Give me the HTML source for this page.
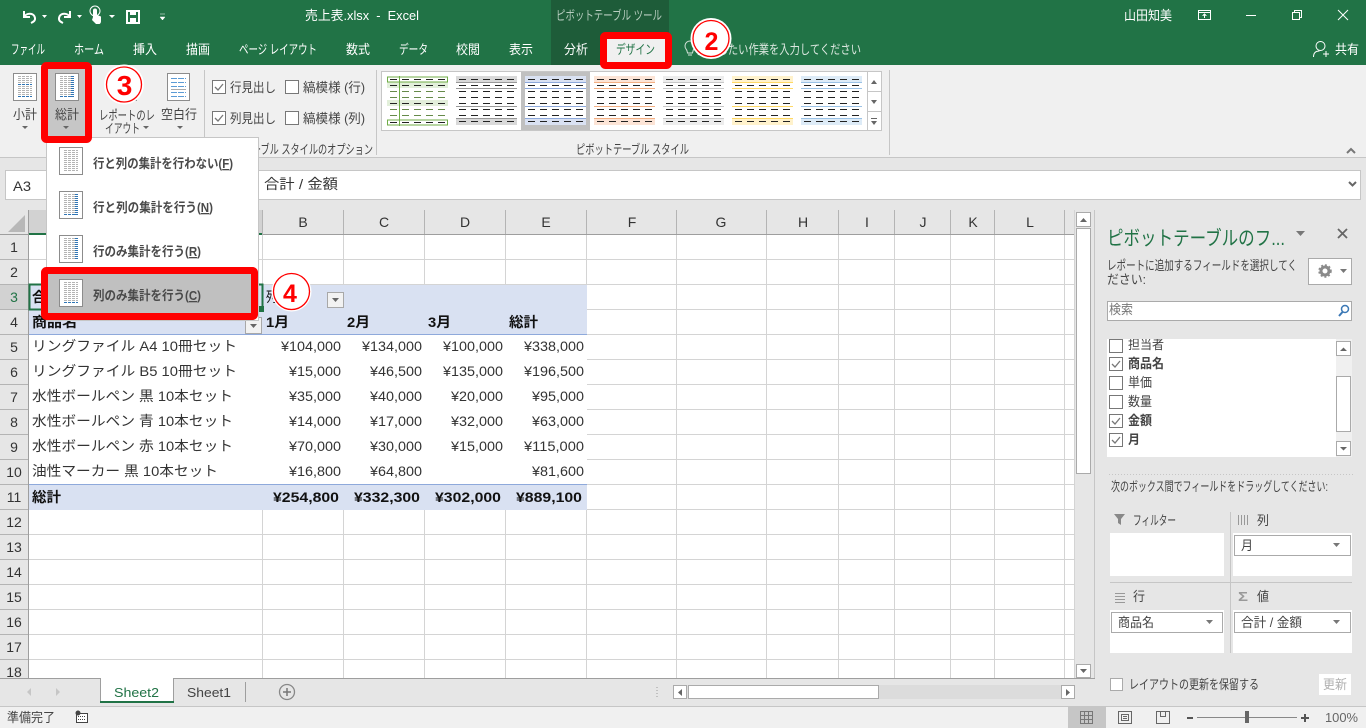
<!DOCTYPE html>
<html lang="ja"><head><meta charset="utf-8"><title>売上表.xlsx - Excel</title>
<style>
html,body{margin:0;padding:0;width:1366px;height:728px;overflow:hidden;background:#fff}
svg{display:block}
text{font-family:"Liberation Sans","Noto Sans CJK JP",sans-serif;font-size:13px;fill:#444;white-space:pre}
.w{fill:#fff}.c{font-size:14px;fill:#333}.b{font-size:14px;font-weight:700;fill:#111}
.h{font-size:14px;fill:#333;text-anchor:middle}
.m{font-size:13px;font-weight:700;fill:#4a4a4a}
.circ{font-size:25px;font-weight:700;fill:#f00;text-anchor:middle}
.r{shape-rendering:crispEdges}
</style></head><body>
<svg width="1366" height="728" viewBox="0 0 1366 728" xmlns="http://www.w3.org/2000/svg">
<defs>
<g id="dots"><path class="r" d="M0 3.500H14M0 5.500H14M0 7.500H14M0 9.500H14M0 11.500H14M0 13.500H14M0 15.500H14M0 17.500H14M0 19.500H14M0 21.500H14M0 23.500H14" stroke="#b4b4b4" stroke-dasharray="3 1" fill="none"/></g>
<g id="doc"><rect class="r" x=".5" y=".5" width="23" height="27" fill="#fff" stroke="#8c8c8c"/><use href="#dots" x="5" y="0"/></g>
<g id="docNone"><use href="#doc"/></g>
<g id="docAll"><use href="#doc"/><path class="r" d="M17.500 3V24" stroke="#2f75b5" stroke-width="3" stroke-dasharray="1 1"/><path class="r" d="M5 23.500H19" stroke="#2f75b5" stroke-dasharray="3 1"/></g>
<g id="docRow"><use href="#doc"/><path class="r" d="M17.500 3V24" stroke="#2f75b5" stroke-width="3" stroke-dasharray="1 1"/></g>
<g id="docCol"><use href="#doc"/><path class="r" d="M5 23.500H19" stroke="#2f75b5" stroke-dasharray="3 1"/></g>
<g id="docSub"><use href="#doc"/><path class="r" d="M5 11.500H19M5 23.500H19" stroke="#2f75b5" stroke-dasharray="3 1"/></g>
<g id="dash"><path d="M3 3.500H58M3 9.500H58M3 15.500H58M3 21.500H58M3 27.500H58M3 33.500H58M3 39.500H58M3 45.500H58" stroke="#222" stroke-dasharray="7 5" fill="none"/></g>
<g id="check"><rect class="r" x=".5" y=".5" width="13" height="13" fill="#fff" stroke="#777"/></g>
<g id="checked"><use href="#check"/><path d="M3 7l3 3 5-6" fill="none" stroke="#777" stroke-width="1.300"/></g>
</defs>

<!-- Title and tabs -->
<rect class="r" width="1366" height="65" fill="#217346"/>
<rect class="r" x="551" width="118" height="65" fill="#1e5c39"/>
<g fill="none" stroke="#fff" stroke-width="2">
<path d="M24 11v6h6M24 17c2-4 10-5 11 1 .4 3-2 4-4 5"/>
<path d="M70 11v6h-6M70 17c-2-4-10-5-11 1-.4 3 2 4 4 5"/>
</g>
<path d="M93 17V10.500a2 2 0 014 0V15l4 1.500V21c0 2-1 3-2 3h-3l-4-4z" fill="#fff"/>
<circle cx="95" cy="11" r="5" fill="none" stroke="#fff"/>
<path d="M42 15h5l-2.500 3zM77 15h5l-2.500 3zM109 15h6l-3 3z" fill="#fff"/>
<rect class="r" x="127" y="11" width="12" height="12" fill="none" stroke="#fff" stroke-width="2"/>
<rect class="r" x="130" y="11" width="6" height="4" fill="#fff"/><rect class="r" x="130" y="18" width="6" height="5" fill="#fff"/>
<path d="M160 14h5M160 17h5l-2.500 3z" fill="#fff" stroke="#fff" stroke-width=".5"/>
<text class="w" x="305" y="20" textLength="114" lengthAdjust="spacingAndGlyphs">売上表.xlsx  -  Excel</text>
<text x="556" y="20" textLength="106" lengthAdjust="spacingAndGlyphs" style="fill:#b7cdbf">ピボットテーブル ツール</text>
<text class="w" x="1124" y="20" textLength="48" lengthAdjust="spacingAndGlyphs">山田知美</text>
<g fill="none" stroke="#fff" class="r">
<rect x="1198.500" y="10.500" width="12" height="9"/><path d="M1198 12.500H1211M1204.500 18V14M1202.500 16l2-2 2 2"/>
<path d="M1246 15.500H1256"/>
<rect x="1292.500" y="12.500" width="7" height="7"/><path d="M1294.500 12V10.500H1301.500V17.500H1300"/>
</g>
<path d="M1338 10l10 10M1348 10l-10 10" stroke="#fff" fill="none"/>
<text class="w" x="11" y="54" textLength="34" lengthAdjust="spacingAndGlyphs">ファイル</text>
<text class="w" x="74" y="54" textLength="30" lengthAdjust="spacingAndGlyphs">ホーム</text>
<text class="w" x="133" y="54" textLength="24" lengthAdjust="spacingAndGlyphs">挿入</text>
<text class="w" x="186" y="54" textLength="24" lengthAdjust="spacingAndGlyphs">描画</text>
<text class="w" x="239" y="54" textLength="78" lengthAdjust="spacingAndGlyphs">ページ レイアウト</text>
<text class="w" x="346" y="54" textLength="24" lengthAdjust="spacingAndGlyphs">数式</text>
<text class="w" x="399" y="54" textLength="29" lengthAdjust="spacingAndGlyphs">データ</text>
<text class="w" x="456" y="54" textLength="24" lengthAdjust="spacingAndGlyphs">校閲</text>
<text class="w" x="509" y="54" textLength="24" lengthAdjust="spacingAndGlyphs">表示</text>
<text class="w" x="564" y="54" textLength="24" lengthAdjust="spacingAndGlyphs">分析</text>
<path d="M686 49a5 5 0 118 0c-1 1-1 2-1.500 4h-5c-.5-2-.5-3-1.500-4z" fill="none" stroke="#d5e3da"/>
<path d="M688 55h4" stroke="#d5e3da"/>
<text x="697" y="54" textLength="164" lengthAdjust="spacingAndGlyphs" style="fill:#dbe7df">実行したい作業を入力してください</text>
<circle cx="1320.500" cy="46" r="4.500" fill="none" stroke="#fff"/><path d="M1313.500 57c0-4 2-6 6-6M1323 54h6M1326 51v6" fill="none" stroke="#fff"/>
<text class="w" x="1335" y="54" textLength="24" lengthAdjust="spacingAndGlyphs">共有</text>

<!-- Ribbon -->
<rect class="r" y="65" width="1366" height="92" fill="#f0f0f0"/>
<rect class="r" y="157" width="1366" height="1" fill="#c6c6c6"/>
<rect class="r" y="158" width="1366" height="52" fill="#e6e6e6"/>
<path class="r" d="M204.500 70V155M376.500 70V155M889.500 70V155" stroke="#c6c6c6"/>
<rect class="r" x="48" y="69" width="37" height="68" fill="#c6c6c6"/>
<use href="#docSub" x="13" y="73"/><use href="#docAll" x="55" y="73"/>
<g transform="translate(113 73)"><use href="#doc"/></g>
<g transform="translate(167 73)"><rect class="r" x=".5" y=".5" width="22" height="27" fill="#fff" stroke="#8c8c8c"/><path class="r" d="M4 5.500H19M4 9.500H19M4 13.500H19M4 19.500H19M4 23.500H19" stroke="#5b9bd5" stroke-dasharray="6 1"/><path class="r" d="M4 16.500H19" stroke="#aaa"/></g>
<text x="13" y="119" textLength="24" lengthAdjust="spacingAndGlyphs">小計</text>
<text x="55" y="119" textLength="24" lengthAdjust="spacingAndGlyphs">総計</text>
<text x="99" y="120" textLength="56" lengthAdjust="spacingAndGlyphs">レポートのレ</text>
<text x="105" y="133" textLength="35" lengthAdjust="spacingAndGlyphs">イアウト</text>
<text x="161" y="119" textLength="36" lengthAdjust="spacingAndGlyphs">空白行</text>
<path d="M22 126h6l-3 3zM63 126h6l-3 3zM143 126h6l-3 3zM177 126h6l-3 3z" fill="#666"/>
<use href="#checked" x="212" y="80"/><use href="#check" x="285" y="80"/><use href="#checked" x="212" y="111"/><use href="#check" x="285" y="111"/>
<text x="230" y="92" textLength="46" lengthAdjust="spacingAndGlyphs">行見出し</text>
<text x="303" y="92" textLength="62" lengthAdjust="spacingAndGlyphs">縞模様 (行)</text>
<text x="230" y="123" textLength="46" lengthAdjust="spacingAndGlyphs">列見出し</text>
<text x="303" y="123" textLength="62" lengthAdjust="spacingAndGlyphs">縞模様 (列)</text>
<text x="206" y="154" textLength="167" lengthAdjust="spacingAndGlyphs">ピボットテーブル スタイルのオプション</text>
<text x="576" y="154" textLength="113" lengthAdjust="spacingAndGlyphs">ピボットテーブル スタイル</text>

<!-- Gallery -->
<rect class="r" x="381.500" y="71.500" width="486" height="59" fill="#fff" stroke="#c6c6c6"/>
<rect class="r" x="521" y="72" width="69" height="58" fill="#c0c0c0"/>
<g class="r" transform="translate(387 76)">
<rect y="6" width="61" height="6" fill="#e2efda"/><rect y="24" width="61" height="6" fill="#e2efda"/>
<rect x=".5" y="1" width="60" height="5" fill="#fff" stroke="#70ad47"/><rect x=".5" y="44" width="60" height="5" fill="#fff" stroke="#70ad47"/>
<path d="M12.500 0V50" stroke="#70ad47"/>
<path d="M3 3.500H58M3 9.500H58M3 27.500H58M3 46.500H58" stroke="#222" stroke-dasharray="7 5"/>
<path d="M3 15.500H58M3 21.500H58M3 33.500H58M3 39.500H58" stroke="#668a4a" stroke-dasharray="7 5"/>
</g>
<g class="r" transform="translate(456 76)"><rect width="61" height="49" fill="#fff"/><rect width="61" height="6" fill="#d9d9d9"/><rect y="43" width="61" height="6" fill="#d9d9d9"/><path d="M0 6.500H61M0 12.500H61M0 30.500H61M0 42.500H61" stroke="#999"/><use href="#dash"/></g>
<g class="r" transform="translate(525 76)"><rect width="61" height="49" fill="#fff"/><rect width="61" height="6" fill="#d9e1f2"/><rect y="43" width="61" height="6" fill="#d9e1f2"/><path d="M0 6.500H61M0 12.500H61M0 30.500H61M0 42.500H61" stroke="#8ea9db"/><use href="#dash"/></g>
<g class="r" transform="translate(594 76)"><rect width="61" height="49" fill="#fff"/><rect width="61" height="6" fill="#fce4d6"/><rect y="43" width="61" height="6" fill="#fce4d6"/><path d="M0 6.500H61M0 12.500H61M0 30.500H61M0 42.500H61" stroke="#f4b084"/><use href="#dash"/></g>
<g class="r" transform="translate(663 76)"><rect width="61" height="49" fill="#fff"/><rect width="61" height="6" fill="#ededed"/><rect y="43" width="61" height="6" fill="#ededed"/><path d="M0 6.500H61M0 12.500H61M0 30.500H61M0 42.500H61" stroke="#c9c9c9"/><use href="#dash"/></g>
<g class="r" transform="translate(732 76)"><rect width="61" height="49" fill="#fff"/><rect width="61" height="6" fill="#fff2cc"/><rect y="43" width="61" height="6" fill="#fff2cc"/><path d="M0 6.500H61M0 12.500H61M0 30.500H61M0 42.500H61" stroke="#ffd966"/><use href="#dash"/></g>
<g class="r" transform="translate(801 76)"><rect width="61" height="49" fill="#fff"/><rect width="61" height="6" fill="#ddebf7"/><rect y="43" width="61" height="6" fill="#ddebf7"/><path d="M0 6.500H61M0 12.500H61M0 30.500H61M0 42.500H61" stroke="#9bc2e6"/><use href="#dash"/></g>
<g class="r" fill="#fff" stroke="#c6c6c6"><rect x="867.500" y="71.500" width="14" height="20"/><rect x="867.500" y="91.500" width="14" height="20"/><rect x="867.500" y="111.500" width="14" height="19"/></g>
<path d="M871 84l3-4 3 4zM871 100l3 4 3-4zM871 118h6v1h-6zM871 121h6l-3 4z" fill="#666"/>
<path d="M1347 153l4-4 4 4" fill="none" stroke="#777" stroke-width="2"/>

<!-- Formula bar -->
<rect class="r" x="5.500" y="170.500" width="1355" height="29" fill="#fff" stroke="#c6c6c6"/>
<text class="c" x="13" y="191" textLength="18" lengthAdjust="spacingAndGlyphs">A3</text>
<text class="c" x="264" y="189" textLength="74" lengthAdjust="spacingAndGlyphs">合計 / 金額</text>
<path d="M1349 182l3.500 3.500 3.500-3.500" fill="none" stroke="#666" stroke-width="2"/>

<!-- Sheet -->
<rect class="r" y="210" width="1095" height="468" fill="#fff"/>
<rect class="r" y="210" width="1074" height="25" fill="#e6e6e6"/>
<rect class="r" y="235" width="29" height="443" fill="#e6e6e6"/>
<rect class="r" x="29" y="210" width="234" height="25" fill="#d2d2d2"/>
<rect class="r" y="285" width="29" height="25" fill="#d2d2d2"/>
<rect class="r" x="29" y="233" width="234" height="2" fill="#217346"/>
<polygon points="8,232 25,232 25,215" fill="#b8b8b8"/>
<path class="r" d="M29 259.500H1074M29 284.500H1074M29 309.500H1074M29 334.500H1074M29 359.500H1074M29 384.500H1074M29 409.500H1074M29 434.500H1074M29 459.500H1074M29 484.500H1074M29 509.500H1074M29 534.500H1074M29 559.500H1074M29 584.500H1074M29 609.500H1074M29 634.500H1074M29 659.500H1074" stroke="#d4d4d4"/>
<path class="r" d="M262.500 235V678M343.500 235V678M424.500 235V678M505.500 235V678M586.500 235V678M676.500 235V678M766.500 235V678M838.500 235V678M894.500 235V678M950.500 235V678M994.500 235V678M1064.500 235V678M1074.500 210V678" stroke="#d4d4d4"/>
<path class="r" d="M262.500 210V235M343.500 210V235M424.500 210V235M505.500 210V235M586.500 210V235M676.500 210V235M766.500 210V235M838.500 210V235M894.500 210V235M950.500 210V235M994.500 210V235M1064.500 210V235" stroke="#b4b4b4"/>
<path class="r" d="M0 259.500H29M0 284.500H29M0 309.500H29M0 334.500H29M0 359.500H29M0 384.500H29M0 409.500H29M0 434.500H29M0 459.500H29M0 484.500H29M0 509.500H29M0 534.500H29M0 559.500H29M0 584.500H29M0 609.500H29M0 634.500H29M0 659.500H29" stroke="#b4b4b4"/>
<path class="r" d="M28.500 210V678M0 234.500H29M263 234.500H1074" stroke="#9e9e9e"/>
<rect class="r" x="29" y="285" width="558" height="50" fill="#d9e1f2"/>
<rect class="r" x="29" y="335" width="558" height="150" fill="#fff"/>
<rect class="r" x="29" y="485" width="558" height="25" fill="#d9e1f2"/>
<path class="r" d="M29 334.500H587M29 484.500H587" stroke="#8ea9db"/>
<text class="h" x="303" y="227">B</text><text class="h" x="384" y="227">C</text><text class="h" x="465" y="227">D</text><text class="h" x="546" y="227">E</text><text class="h" x="632" y="227">F</text><text class="h" x="721" y="227">G</text><text class="h" x="803" y="227">H</text><text class="h" x="867" y="227">I</text><text class="h" x="923" y="227">J</text><text class="h" x="973" y="227">K</text><text class="h" x="1030" y="227">L</text>
<text class="h" x="14" y="252">1</text><text class="h" x="14" y="277">2</text><text class="h" x="14" y="302" style="fill:#217346">3</text><text class="h" x="14" y="327">4</text><text class="h" x="14" y="352">5</text><text class="h" x="14" y="377">6</text><text class="h" x="14" y="402">7</text><text class="h" x="14" y="427">8</text><text class="h" x="14" y="452">9</text><text class="h" x="14" y="477">10</text><text class="h" x="14" y="502">11</text><text class="h" x="14" y="527">12</text><text class="h" x="14" y="552">13</text><text class="h" x="14" y="577">14</text><text class="h" x="14" y="602">15</text><text class="h" x="14" y="627">16</text><text class="h" x="14" y="652">17</text><text class="h" x="14" y="677">18</text>
<rect x="29.500" y="284.500" width="233" height="25" fill="none" stroke="#217346" stroke-width="2"/>
<rect class="r" x="258" y="306" width="6" height="6" fill="#217346"/>
<text class="b" x="32" y="302">合計 / 金額</text><text class="c" x="266" y="302" textLength="43" lengthAdjust="spacingAndGlyphs" style="fill:#111">列ラベル</text>
<text class="b" x="32" y="327" textLength="45" lengthAdjust="spacingAndGlyphs">商品名</text>
<text class="b" x="266" y="327" textLength="23" lengthAdjust="spacingAndGlyphs">1月</text><text class="b" x="347" y="327" textLength="23" lengthAdjust="spacingAndGlyphs">2月</text><text class="b" x="428" y="327" textLength="23" lengthAdjust="spacingAndGlyphs">3月</text><text class="b" x="509" y="327" textLength="29" lengthAdjust="spacingAndGlyphs">総計</text>
<g class="r" fill="#f2f2f2" stroke="#a8a8a8"><rect x="245.500" y="317.500" width="16" height="16"/><rect x="327.500" y="292.500" width="16" height="15"/></g>
<path d="M250 324h7l-3.500 4zM332 298h7l-3.500 4z" fill="#666"/>
<text class="c" x="32" y="351" textLength="205" lengthAdjust="spacingAndGlyphs">リングファイル A4 10冊セット</text>
<text class="c" x="32" y="376" textLength="205" lengthAdjust="spacingAndGlyphs">リングファイル B5 10冊セット</text>
<text class="c" x="32" y="401" textLength="201" lengthAdjust="spacingAndGlyphs">水性ボールペン 黒 10本セット</text>
<text class="c" x="32" y="426" textLength="201" lengthAdjust="spacingAndGlyphs">水性ボールペン 青 10本セット</text>
<text class="c" x="32" y="451" textLength="201" lengthAdjust="spacingAndGlyphs">水性ボールペン 赤 10本セット</text>
<text class="c" x="32" y="476" textLength="186" lengthAdjust="spacingAndGlyphs">油性マーカー 黒 10本セット</text>
<g>
<text class="c" x="281" y="351" textLength="60" lengthAdjust="spacingAndGlyphs">¥104,000</text><text class="c" x="362" y="351" textLength="60" lengthAdjust="spacingAndGlyphs">¥134,000</text><text class="c" x="443" y="351" textLength="60" lengthAdjust="spacingAndGlyphs">¥100,000</text><text class="c" x="524" y="351" textLength="60" lengthAdjust="spacingAndGlyphs">¥338,000</text>
<text class="c" x="289" y="376" textLength="52" lengthAdjust="spacingAndGlyphs">¥15,000</text><text class="c" x="370" y="376" textLength="52" lengthAdjust="spacingAndGlyphs">¥46,500</text><text class="c" x="443" y="376" textLength="60" lengthAdjust="spacingAndGlyphs">¥135,000</text><text class="c" x="524" y="376" textLength="60" lengthAdjust="spacingAndGlyphs">¥196,500</text>
<text class="c" x="289" y="401" textLength="52" lengthAdjust="spacingAndGlyphs">¥35,000</text><text class="c" x="370" y="401" textLength="52" lengthAdjust="spacingAndGlyphs">¥40,000</text><text class="c" x="451" y="401" textLength="52" lengthAdjust="spacingAndGlyphs">¥20,000</text><text class="c" x="532" y="401" textLength="52" lengthAdjust="spacingAndGlyphs">¥95,000</text>
<text class="c" x="289" y="426" textLength="52" lengthAdjust="spacingAndGlyphs">¥14,000</text><text class="c" x="370" y="426" textLength="52" lengthAdjust="spacingAndGlyphs">¥17,000</text><text class="c" x="451" y="426" textLength="52" lengthAdjust="spacingAndGlyphs">¥32,000</text><text class="c" x="532" y="426" textLength="52" lengthAdjust="spacingAndGlyphs">¥63,000</text>
<text class="c" x="289" y="451" textLength="52" lengthAdjust="spacingAndGlyphs">¥70,000</text><text class="c" x="370" y="451" textLength="52" lengthAdjust="spacingAndGlyphs">¥30,000</text><text class="c" x="451" y="451" textLength="52" lengthAdjust="spacingAndGlyphs">¥15,000</text><text class="c" x="524" y="451" textLength="60" lengthAdjust="spacingAndGlyphs">¥115,000</text>
<text class="c" x="289" y="476" textLength="52" lengthAdjust="spacingAndGlyphs">¥16,800</text><text class="c" x="370" y="476" textLength="52" lengthAdjust="spacingAndGlyphs">¥64,800</text><text class="c" x="532" y="476" textLength="52" lengthAdjust="spacingAndGlyphs">¥81,600</text>
</g>
<text class="b" x="32" y="502" textLength="29" lengthAdjust="spacingAndGlyphs">総計</text>
<text class="b" x="273" y="502" textLength="66" lengthAdjust="spacingAndGlyphs">¥254,800</text><text class="b" x="354" y="502" textLength="66" lengthAdjust="spacingAndGlyphs">¥332,300</text><text class="b" x="435" y="502" textLength="66" lengthAdjust="spacingAndGlyphs">¥302,000</text><text class="b" x="516" y="502" textLength="66" lengthAdjust="spacingAndGlyphs">¥889,100</text>

<!-- V scrollbar -->
<rect class="r" x="1075" y="210" width="20" height="468" fill="#e6e6e6"/>
<rect class="r" x="1076.500" y="212.500" width="14" height="14" fill="#fff" stroke="#aaa"/>
<rect class="r" x="1076.500" y="228.500" width="14" height="245" fill="#fff" stroke="#aaa"/>
<rect class="r" x="1076.500" y="664.500" width="14" height="13" fill="#fff" stroke="#aaa"/>
<path d="M1080 222l3.500-4 3.500 4zM1080 669l3.500 4 3.500-4z" fill="#666"/>

<!-- Pivot pane -->
<rect class="r" x="1095" y="210" width="271" height="498" fill="#e6e6e6"/>
<path class="r" d="M1094.500 210V707" stroke="#c6c6c6"/>
<text x="1107" y="245" textLength="178" lengthAdjust="spacingAndGlyphs" style="font-size:20px;fill:#217346">ピボットテーブルのフ...</text>
<path d="M1296 231h9l-4.500 5z" fill="#777"/><path d="M1338 229l9 9M1347 229l-9 9" stroke="#666" stroke-width="1.800" fill="none"/>
<text x="1107" y="270" textLength="190" lengthAdjust="spacingAndGlyphs">レポートに追加するフィールドを選択してく</text>
<text x="1107" y="284" textLength="39" lengthAdjust="spacingAndGlyphs">ださい:</text>
<rect class="r" x="1308.500" y="258.500" width="43" height="26" fill="#fff" stroke="#aaa"/>
<circle cx="1325" cy="271" r="4" fill="none" stroke="#8a8a8a" stroke-width="3"/><circle cx="1325" cy="271" r="6" fill="none" stroke="#8a8a8a" stroke-width="1.500" stroke-dasharray="2 2"/>
<path d="M1340 269h7l-3.500 4z" fill="#777"/>
<rect class="r" x="1107.500" y="301.500" width="244" height="19" fill="#fff" stroke="#aaa"/>
<text x="1109" y="314" textLength="24" lengthAdjust="spacingAndGlyphs" style="fill:#777">検索</text>
<circle cx="1345" cy="309" r="3.500" fill="none" stroke="#3b78b5" stroke-width="1.500"/><path d="M1342.500 312l-3.500 4" stroke="#3b78b5" stroke-width="2"/>
<rect class="r" x="1107" y="339" width="245" height="118" fill="#fff"/>
<rect class="r" x="1336" y="339" width="16" height="118" fill="#f0f0f0"/>
<g class="r" fill="#fff" stroke="#aaa"><rect x="1336.500" y="341.500" width="14" height="14"/><rect x="1336.500" y="376.500" width="14" height="55"/><rect x="1336.500" y="441.500" width="14" height="14"/></g>
<path d="M1340 351l3.500-3.500 3.500 3.500zM1340 447l3.500 3.500 3.500-3.500z" fill="#666"/>
<use href="#check" x="1109" y="339"/><text x="1128" y="349" textLength="36" lengthAdjust="spacingAndGlyphs">担当者</text>
<use href="#checked" x="1109" y="357"/><text x="1128" y="368" textLength="36" lengthAdjust="spacingAndGlyphs" style="font-weight:700">商品名</text>
<use href="#check" x="1109" y="376"/><text x="1128" y="387" textLength="24" lengthAdjust="spacingAndGlyphs">単価</text>
<use href="#check" x="1109" y="395"/><text x="1128" y="406" textLength="24" lengthAdjust="spacingAndGlyphs">数量</text>
<use href="#checked" x="1109" y="414"/><text x="1128" y="425" textLength="24" lengthAdjust="spacingAndGlyphs" style="font-weight:700">金額</text>
<use href="#checked" x="1109" y="433"/><text x="1128" y="444" textLength="12" lengthAdjust="spacingAndGlyphs" style="font-weight:700">月</text>
<rect class="r" x="1107" y="330" width="229" height="9" fill="#e6e6e6"/>
<path class="r" d="M1109 474.500H1355" stroke="#c6c6c6" stroke-dasharray="1 2"/>
<text x="1111" y="491" textLength="217" lengthAdjust="spacingAndGlyphs">次のボックス間でフィールドをドラッグしてください:</text>
<path d="M1114 514h11l-4 5v6l-3-2v-4z" fill="#888"/>
<text x="1133" y="525" textLength="43" lengthAdjust="spacingAndGlyphs">フィルター</text>
<path class="r" d="M1238.500 515V525M1241.500 515V525M1244.500 515V525M1247.500 515V525" stroke="#999"/>
<text x="1257" y="525" textLength="12" lengthAdjust="spacingAndGlyphs">列</text>
<path class="r" d="M1115 593.500H1125M1115 596.500H1125M1115 599.500H1125M1115 602.500H1125" stroke="#999"/>
<text x="1133" y="601" textLength="12" lengthAdjust="spacingAndGlyphs">行</text>
<text x="1238" y="601" textLength="10" lengthAdjust="spacingAndGlyphs" style="fill:#999;font-weight:700">Σ</text>
<text x="1257" y="601" textLength="12" lengthAdjust="spacingAndGlyphs">値</text>
<g class="r" fill="#fff"><rect x="1110" y="533" width="114" height="43"/><rect x="1233" y="533" width="119" height="43"/><rect x="1110" y="610" width="114" height="43"/><rect x="1233" y="610" width="119" height="43"/></g>
<path class="r" d="M1230.500 512V653M1110 582.500H1352" stroke="#c6c6c6"/>
<g class="r" fill="#fff" stroke="#aaa"><rect x="1234.500" y="535.500" width="116" height="20"/><rect x="1111.500" y="612.500" width="111" height="20"/><rect x="1234.500" y="612.500" width="116" height="20"/></g>
<text x="1241" y="550" textLength="12" lengthAdjust="spacingAndGlyphs">月</text>
<text x="1118" y="627" textLength="36" lengthAdjust="spacingAndGlyphs">商品名</text>
<text x="1241" y="627" textLength="61" lengthAdjust="spacingAndGlyphs">合計 / 金額</text>
<path d="M1333 543h7l-3.500 4zM1206 620h7l-3.500 4zM1333 620h7l-3.500 4z" fill="#777"/>
<rect class="r" x="1110.500" y="678.500" width="12" height="12" fill="#fff" stroke="#aaa"/>
<text x="1129" y="689" textLength="130" lengthAdjust="spacingAndGlyphs">レイアウトの更新を保留する</text>
<rect class="r" x="1319" y="674" width="32" height="21" fill="#fff"/>
<text x="1323" y="689" textLength="24" lengthAdjust="spacingAndGlyphs" style="fill:#b0b0b0">更新</text>

<!-- Tabs -->
<rect class="r" y="678" width="1095" height="28" fill="#e6e6e6"/>
<path class="r" d="M0 678.500H1095" stroke="#9e9e9e"/>
<rect class="r" x="100" y="678" width="74" height="25" fill="#fff"/>
<path class="r" d="M100.500 678V703M173.500 678V703M245.500 682V702" stroke="#9e9e9e"/>
<rect class="r" x="100" y="701" width="74" height="2" fill="#217346"/>
<rect class="r" x="101" y="678" width="72" height="1" fill="#fff"/>
<path d="M31 688l-4 4 4 4zM56 688l4 4-4 4z" fill="#c6c6c6"/>
<text x="114" y="697" textLength="45" lengthAdjust="spacingAndGlyphs" style="font-size:13px;fill:#217346">Sheet2</text>
<text x="187" y="697" textLength="44" lengthAdjust="spacingAndGlyphs" style="font-size:13px;fill:#444">Sheet1</text>
<circle cx="287" cy="692" r="7.500" fill="none" stroke="#888" stroke-width="1.300"/><path d="M283 692h8M287 688v8" stroke="#777" stroke-width="1.500"/>
<path class="r" d="M657 687v10" stroke="#999" stroke-dasharray="1 2"/>
<rect class="r" x="673" y="685" width="401" height="14" fill="#dcdcdc"/>
<g class="r" fill="#fff" stroke="#aaa"><rect x="673.500" y="685.500" width="13" height="13"/><rect x="688.500" y="685.500" width="190" height="13"/><rect x="1061.500" y="685.500" width="13" height="13"/></g>
<path d="M682 689l-4 3.500 4 3.500zM1066 689l4 3.500-4 3.500z" fill="#666"/>

<!-- Status -->
<rect class="r" y="706" width="1366" height="22" fill="#f0f0f0"/>
<path class="r" d="M0 706.500H1366" stroke="#c6c6c6"/>
<text x="7" y="722" textLength="48" lengthAdjust="spacingAndGlyphs">準備完了</text>
<rect class="r" x="76.500" y="713.500" width="11" height="9" fill="#fff" stroke="#444"/><circle cx="78" cy="713" r="2.500" fill="#444"/><path class="r" d="M78 716.500H86M78 719.500H86" stroke="#444" stroke-dasharray="1 1"/>
<rect class="r" x="1068" y="707" width="38" height="21" fill="#c6c6c6"/>
<path class="r" d="M1080.500 711.500H1092.500V723.500H1080.500ZM1084.500 711.500V723.500M1088.500 711.500V723.500M1080.500 715.500H1092.500M1080.500 719.500H1092.500" fill="none" stroke="#777"/>
<path class="r" d="M1118.500 711.500H1131.500V723.500H1118.500ZM1121.500 714.500H1128.500V720.500H1121.500ZM1123 716.500H1127M1123 718.500H1127" fill="none" stroke="#666"/>
<path class="r" d="M1156.500 711.500H1169.500V723.500H1156.500ZM1160.500 711.500V716.500H1165.500V711.500" fill="none" stroke="#666"/>
<path class="r" d="M1197 717.500H1297" stroke="#888"/>
<path class="r" d="M1187 718H1193M1301 718H1309M1305 714V722" stroke="#555" stroke-width="2"/>
<rect class="r" x="1245" y="711" width="4" height="12" fill="#666"/>
<text x="1325" y="722" textLength="33" lengthAdjust="spacingAndGlyphs" style="fill:#666">100%</text>

<!-- Dropdown menu -->
<rect class="r" x="46.500" y="137.500" width="212" height="183" fill="#fff" stroke="#c6c6c6"/>
<use href="#docNone" x="59" y="147"/><use href="#docAll" x="59" y="191"/><use href="#docRow" x="59" y="235"/><rect class="r" x="48" y="274" width="203" height="39" fill="#c0c0c0"/><use href="#docCol" x="59" y="279"/>
<text class="m" x="93" y="168" textLength="140" lengthAdjust="spacingAndGlyphs">行と列の集計を行わない(<tspan text-decoration="underline">F</tspan>)</text>
<text class="m" x="93" y="212" textLength="120" lengthAdjust="spacingAndGlyphs">行と列の集計を行う(<tspan text-decoration="underline">N</tspan>)</text>
<text class="m" x="93" y="256" textLength="108" lengthAdjust="spacingAndGlyphs">行のみ集計を行う(<tspan text-decoration="underline">R</tspan>)</text>
<text class="m" x="93" y="300" textLength="108" lengthAdjust="spacingAndGlyphs">列のみ集計を行う(<tspan text-decoration="underline">C</tspan>)</text>

<!-- Red highlight boxes -->
<g fill="none" stroke="#f00" stroke-width="7" stroke-linejoin="round">
<rect x="603.500" y="35.500" width="65" height="30" rx="2"/>
<rect x="44.500" y="65.500" width="44" height="74" rx="2"/>
<rect x="44.500" y="270.500" width="210" height="46" rx="2"/>
</g>
<rect class="r" x="607" y="39" width="58" height="23" fill="#f0f0f0"/>
<text x="616" y="54" textLength="39" lengthAdjust="spacingAndGlyphs" style="fill:#217346">デザイン</text>

<!-- Numbered circles -->
<g fill="#fff"><circle cx="711" cy="38.500" r="20.500"/><circle cx="124" cy="84.500" r="20"/><circle cx="291.500" cy="291.500" r="20"/></g>
<g fill="none" stroke="#f00" stroke-width="1.300"><circle cx="711" cy="38.500" r="18"/><circle cx="124" cy="84.500" r="17.500"/><circle cx="291.500" cy="291.500" r="18"/></g>
<text class="circ" x="711.500" y="50">2</text><text class="circ" x="124.500" y="95" style="font-size:28px">3</text><text class="circ" x="290" y="302">4</text>
</svg>
</body></html>
